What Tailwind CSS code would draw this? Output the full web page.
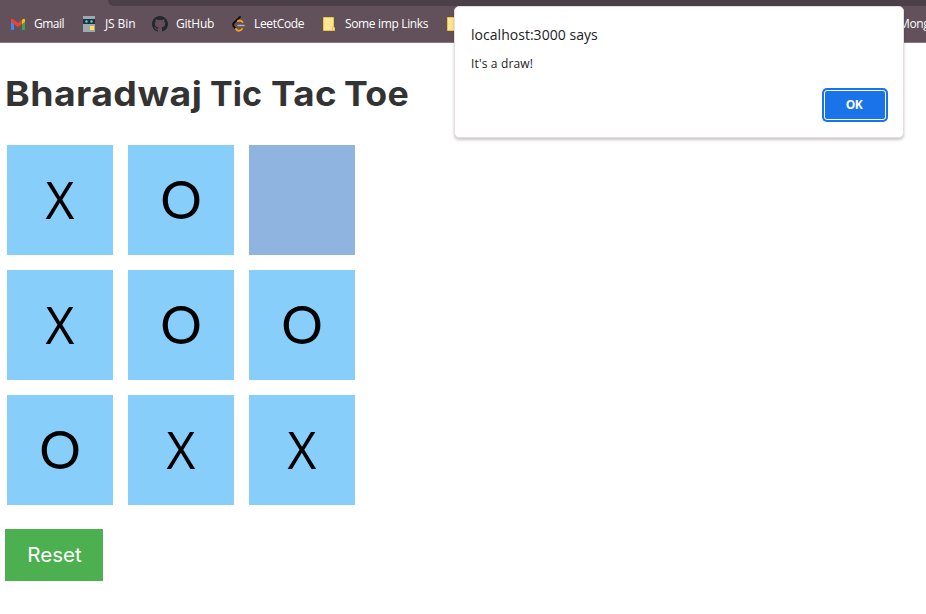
<!DOCTYPE html>
<html lang="en">
<head>
<meta charset="utf-8">
<title>Bharadwaj Tic Tac Toe</title>
<script src="https://cdn.jsdelivr.net/npm/@tailwindcss/browser@4"></script>
</head>
<body class="relative h-[614px] w-[926px] overflow-hidden bg-white font-['Open_Sans',sans-serif]">
<header class="h-[43px] overflow-hidden border-b border-[#8c7680] bg-[#62515b]">
  <div class="h-[6px] pl-[108px]"><div class="h-full rounded-bl-lg bg-[#4b3f48]"></div></div>
  <nav class="flex h-[36px] items-center pl-[11px] text-[12px] leading-4 whitespace-nowrap text-white">
    <a class="flex w-[72px] shrink-0 items-center gap-[9px]">
      <svg class="h-[12px] w-[14px] shrink-0" viewBox="0 0 14 12"><path d="M0 3l3 2v7H1q-1 0-1-1z" fill="#4285f4"/><path d="M11 5l3-2v8q0 1-1 1h-2z" fill="#34a853"/><path d="M11 2l1-1q2-1 2 1v2l-3 2z" fill="#fbbc04"/><path d="M0 2q0-2 2-1l5 4 4-3v4L7 9 3 6 0 4z" fill="#ea4335"/></svg>
      <span class="tracking-[-0.5px]">Gmail</span></a>
    <a class="flex w-[69px] shrink-0 items-center gap-[10px]">
      <svg class="h-[16px] w-[12px] shrink-0" viewBox="0 0 12 16"><path d="M0 0h12v3H0zM0 7h12v9H0z" fill="#9da9b1"/><path d="M0 3h12v5H0z" fill="#24313b"/><circle cx="3.500" cy="5.500" r="1.300" fill="#4fc3ee"/><circle cx="8.500" cy="5.500" r="1.300" fill="#4fc3ee"/><path d="M7 10h4v4H7z" fill="#ffe14d"/></svg>
      <span class="tracking-[-0.1px]">JS Bin</span></a>
    <a class="flex w-[80px] shrink-0 items-center gap-[8px]">
      <svg class="h-[16px] w-[16px] shrink-0" viewBox="0 0 16 16"><path fill="#24292e" d="M8 0C3.58 0 0 3.58 0 8c0 3.54 2.29 6.53 5.47 7.59.4.07.55-.17.55-.38 0-.19-.01-.82-.01-1.49-2.01.37-2.53-.49-2.69-.94-.09-.23-.48-.94-.82-1.13-.28-.15-.68-.52-.01-.53.63-.01 1.08.58 1.23.82.72 1.21 1.87.87 2.33.66.07-.52.28-.87.51-1.07-1.78-.2-3.64-.89-3.64-3.95 0-.87.31-1.59.82-2.15-.08-.2-.36-1.02.08-2.12 0 0 .67-.21 2.2.82a7.6 7.6 0 0 1 4 0c1.53-1.04 2.2-.82 2.2-.82.44 1.1.16 1.92.08 2.12.51.56.82 1.27.82 2.15 0 3.07-1.87 3.75-3.65 3.95.29.25.54.73.54 1.48 0 1.07-.01 1.93-.01 2.2 0 .21.15.46.55.38A8 8 0 0 0 8 0"/></svg>
      <span class="tracking-[-0.25px]">GitHub</span></a>
    <a class="flex w-[91px] shrink-0 items-center gap-[9px]">
      <svg class="h-[16px] w-[13px] shrink-0" viewBox="0 0 13 16" fill="none" stroke-width="1.900" stroke-linecap="round"><path d="M8 1L1.800 7q-1.400 1.500 0 3.500l1.500 2" stroke="#111"/><path d="M6 5q2.500-1.500 4.500 1M4 13l1.500 1.400q2.500 1 4.500-1.400" stroke="#ffa116"/><path d="M6 9.500h6" stroke="#b3b3b3" stroke-width="1.500"/></svg>
      <span class="tracking-[-0.33px]">LeetCode</span></a>
    <a class="flex w-[124px] shrink-0 items-center gap-[10px]">
      <svg class="h-[14px] w-[12px] shrink-0" viewBox="0 0 12 14"><path d="M.5.5h10v9l1 1v3H.5z" fill="#ffe591" stroke="#e8c44c"/><path d="M9.500 13v-3h1.500" fill="none" stroke="#e8c44c"/></svg>
      <span class="tracking-[-0.35px]">Some imp Links</span></a>
    <a class="flex w-[452px] shrink-0 items-center">
      <svg class="h-[14px] w-[12px] shrink-0" viewBox="0 0 12 14"><path d="M.5.5h11v13H.5z" fill="#ffe591" stroke="#e8c44c"/></svg></a>
    <span class="tracking-[-0.4px]">Mong</span>
  </nav>
</header>
<main class="pl-[5px]">
  <h1 class="flex h-[102px] items-center pb-[1px] font-['Inter',sans-serif] text-[34px] font-bold whitespace-nowrap text-[#333] *:shrink-0 *:origin-left"><span class="w-[205px] scale-x-[1.1] tracking-[0.4px]">Bharadwaj </span><span class="w-[61px]">Tic </span><span class="w-[73px] scale-x-[1.08] tracking-[0.4px]">Tac </span><span class="scale-x-[1.05] tracking-[0.3px]">Toe</span></h1>
  <div class="ml-[2px] grid w-[348px] grid-cols-3 gap-[15px] text-black *:flex *:h-[110px] *:items-center *:justify-center *:bg-[#87cefa] *:pb-[3px] *:leading-none">
    <div class="text-[52px]"><span class="scale-x-[.96]">X</span></div><div class="font-['Lato'] text-[52px]">O</div><div class="bg-[#90b4e0]!"></div>
    <div class="text-[52px]"><span class="scale-x-[.96]">X</span></div><div class="font-['Lato'] text-[52px]">O</div><div class="font-['Lato'] text-[52px]">O</div>
    <div class="font-['Lato'] text-[52px]">O</div><div class="text-[52px]"><span class="scale-x-[.96]">X</span></div><div class="text-[52px]"><span class="scale-x-[.96]">X</span></div>
  </div>
  <button class="mt-[24px] flex h-[52px] w-[98px] items-center justify-center bg-[#4caf50] font-['Inter',sans-serif] text-[20px] text-white"><span class="scale-x-[1.03]">Reset</span></button>
</main>
<section class="absolute top-[6px] left-[454px] h-[132px] w-[450px] rounded-[5px] border border-[#e7dce2] bg-white px-4 pt-[18px] shadow-[0_2px_3px_rgba(0,0,0,.22)]">
  <h2 class="text-[14px] leading-5 tracking-[0.03px] text-[#202124]">localhost:3000 says</h2>
  <p class="mt-[10px] text-[12px] leading-[18px] tracking-[0.15px] text-[#202124]">It's a draw!</p>
  <button class="absolute right-[15px] bottom-[15px] flex h-[34px] w-[66px] rounded-[5px] bg-[#1a73e8] p-[2px]"><span class="flex flex-1 items-center justify-center rounded-[3px] border border-white pr-[2px] text-[12px] font-bold tracking-[-0.4px] text-white">OK</span></button>
</section>
</body>
</html>
